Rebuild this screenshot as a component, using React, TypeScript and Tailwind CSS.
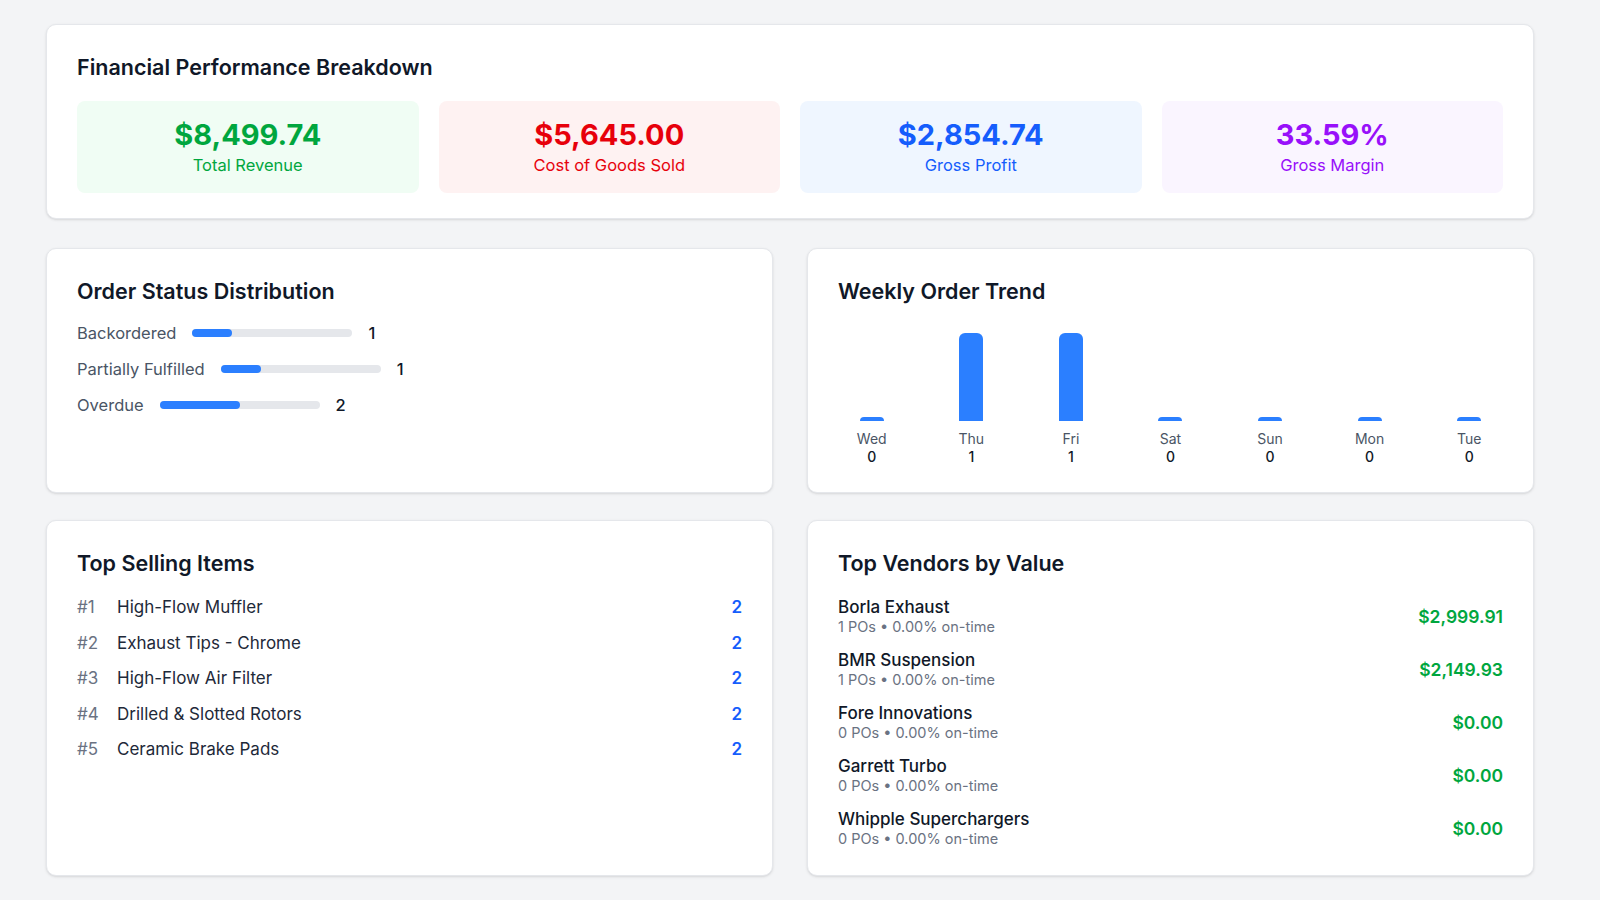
import React from 'react';

interface Stat {
  value: string;
  label: string;
  box: string;
  text: string;
}

const stats: Stat[] = [
  { value: '$8,499.74', label: 'Total Revenue', box: 'bg-green-50', text: 'text-green-600' },
  { value: '$5,645.00', label: 'Cost of Goods Sold', box: 'bg-red-50', text: 'text-red-600' },
  { value: '$2,854.74', label: 'Gross Profit', box: 'bg-blue-50', text: 'text-blue-600' },
  { value: '33.59%', label: 'Gross Margin', box: 'bg-purple-50', text: 'text-purple-600' },
];

const statuses = [
  { label: 'Backordered', count: 1 },
  { label: 'Partially Fulfilled', count: 1 },
  { label: 'Overdue', count: 2 },
];

const weekly = [
  { day: 'Wed', count: 0 },
  { day: 'Thu', count: 1 },
  { day: 'Fri', count: 1 },
  { day: 'Sat', count: 0 },
  { day: 'Sun', count: 0 },
  { day: 'Mon', count: 0 },
  { day: 'Tue', count: 0 },
];

const topItems = [
  'High-Flow Muffler',
  'Exhaust Tips - Chrome',
  'High-Flow Air Filter',
  'Drilled & Slotted Rotors',
  'Ceramic Brake Pads',
];

const vendors = [
  { name: 'Borla Exhaust', pos: 1, value: '$2,999.91' },
  { name: 'BMR Suspension', pos: 1, value: '$2,149.93' },
  { name: 'Fore Innovations', pos: 0, value: '$0.00' },
  { name: 'Garrett Turbo', pos: 0, value: '$0.00' },
  { name: 'Whipple Superchargers', pos: 0, value: '$0.00' },
];

const Card: React.FC<{ title: string; children: React.ReactNode; gap?: string; pad?: string }> = ({
  title,
  children,
  gap = 'mb-5',
  pad = 'py-7',
}) => (
  <section className={`rounded-[10px] border border-gray-200 bg-white px-[30px] shadow-sm ${pad}`}>
    <h2 className={`text-[21.5px] font-semibold leading-7 text-gray-900 ${gap}`}>{title}</h2>
    {children}
  </section>
);

export default function App() {
  const totalOrders = statuses.reduce((s, x) => s + x.count, 0);
  const maxWeek = Math.max(...weekly.map((w) => w.count), 1);

  return (
    <div className="min-h-screen bg-gray-100 pb-6 pl-[46px] pr-[66px] pt-6 font-['Inter',sans-serif]">
      <div className="flex flex-col gap-[29px]">
        {/* Financial summary */}
        <Card title="Financial Performance Breakdown" pad="pt-7 pb-[25px]">
          <div className="grid grid-cols-4 gap-5">
            {stats.map((s) => (
              <div key={s.label} className={`rounded-lg py-4 text-center ${s.box}`}>
                <div className={`text-[29px] font-bold leading-9 ${s.text}`}>{s.value}</div>
                <div className={`text-[16.5px] leading-6 ${s.text}`}>{s.label}</div>
              </div>
            ))}
          </div>
        </Card>

        <div className="grid grid-cols-2 gap-x-[34px] gap-y-[27px]">
          {/* Order status */}
          <Card title="Order Status Distribution" gap="mb-4" pad="pt-7 pb-[28px]">
            <div className="flex flex-col gap-3">
              {statuses.map((s) => (
                <div key={s.label} className="flex items-center gap-4 text-[16.5px] leading-6">
                  <span className="text-gray-600">{s.label}</span>
                  <div className="h-2 w-40 rounded-full bg-gray-200">
                    <div
                      className="h-2 rounded-full bg-blue-500"
                      style={{ width: `${(s.count / totalOrders) * 100}%` }}
                    />
                  </div>
                  <span className="font-medium text-gray-900">{s.count}</span>
                </div>
              ))}
            </div>
          </Card>

          {/* Weekly trend */}
          <Card title="Weekly Order Trend" gap="mb-[21px]" pad="pt-7 pb-[26px]">
            <div className="grid grid-cols-7 gap-8">
              {weekly.map((w) => (
                <div key={w.day} className="flex flex-col items-center">
                  <div className="flex h-[95px] items-end">
                    <div
                      className="w-6 rounded-t-md bg-blue-500"
                      style={{ height: `${Math.max((w.count / maxWeek) * 88, 4)}px` }}
                    />
                  </div>
                  <span className="mt-[9px] text-[14px] leading-[18px] text-gray-600">{w.day}</span>
                  <span className="text-[14px] font-medium leading-[18px] text-gray-900">{w.count}</span>
                </div>
              ))}
            </div>
          </Card>

          {/* Top items */}
          <Card title="Top Selling Items" gap="mb-[18px]" pad="pt-7 pb-[26px]">
            <div className="flex flex-col gap-[11.5px]">
              {topItems.map((name, i) => (
                <div key={name} className="flex items-center text-[17px] leading-6">
                  <span className="w-10 text-gray-500">#{i + 1}</span>
                  <span className="flex-1 text-gray-800">{name}</span>
                  <span className="font-semibold text-blue-600">2</span>
                </div>
              ))}
            </div>
          </Card>

          {/* Vendors */}
          <Card title="Top Vendors by Value" pad="pt-7 pb-[26px]">
            <div className="flex flex-col gap-[13px]">
              {vendors.map((v) => (
                <div key={v.name} className="flex items-center justify-between">
                  <div>
                    <div className="text-[17px] font-medium leading-5 text-gray-900">{v.name}</div>
                    <div className="text-[14.5px] leading-5 text-gray-500">
                      {v.pos} POs • 0.00% on-time
                    </div>
                  </div>
                  <span className="text-[17.5px] font-semibold text-green-600">{v.value}</span>
                </div>
              ))}
            </div>
          </Card>
        </div>
      </div>
    </div>
  );
}
